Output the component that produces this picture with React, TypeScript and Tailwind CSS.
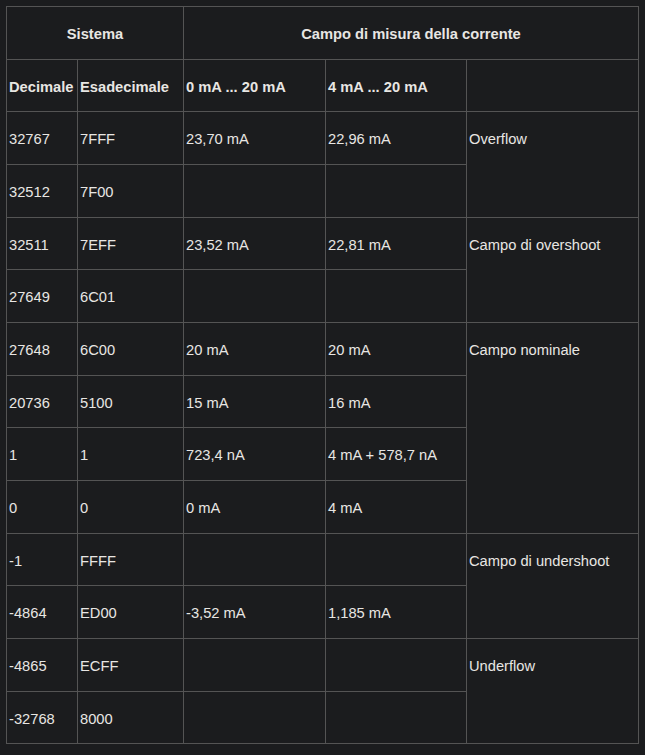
const rows: { dec: string; hex: string; a: string; b: string; range?: string; span?: number }[] = [
  { dec: '32767', hex: '7FFF', a: '23,70 mA', b: '22,96 mA', range: 'Overflow', span: 2 },
  { dec: '32512', hex: '7F00', a: '', b: '' },
  { dec: '32511', hex: '7EFF', a: '23,52 mA', b: '22,81 mA', range: 'Campo di overshoot', span: 2 },
  { dec: '27649', hex: '6C01', a: '', b: '' },
  { dec: '27648', hex: '6C00', a: '20 mA', b: '20 mA', range: 'Campo nominale', span: 4 },
  { dec: '20736', hex: '5100', a: '15 mA', b: '16 mA' },
  { dec: '1', hex: '1', a: '723,4 nA', b: '4 mA + 578,7 nA' },
  { dec: '0', hex: '0', a: '0 mA', b: '4 mA' },
  { dec: '-1', hex: 'FFFF', a: '', b: '', range: 'Campo di undershoot', span: 2 },
  { dec: '-4864', hex: 'ED00', a: '-3,52 mA', b: '1,185 mA' },
  { dec: '-4865', hex: 'ECFF', a: '', b: '', range: 'Underflow', span: 2 },
  { dec: '-32768', hex: '8000', a: '', b: '' },
]

const cell = 'border border-[#545454] px-[2px] pt-[20px] pb-[16px] leading-[15.67px] align-top text-left'

export default function App() {
  return (
    <div className="min-h-[755px] bg-[#1b1c1e] p-[6px] text-[14.7px] text-[#e8e6e3] [font-family:'Liberation_Sans',Arial,sans-serif]">
      <table className="border-collapse">
        <colgroup>
          <col className="w-[71px]" />
          <col className="w-[106px]" />
          <col className="w-[142px]" />
          <col className="w-[141px]" />
          <col className="w-[172px]" />
        </colgroup>
        <thead>
          <tr>
            <th colSpan={2} className={`${cell} !text-center font-bold`}>Sistema</th>
            <th colSpan={3} className={`${cell} !text-center font-bold`}>Campo di misura della corrente</th>
          </tr>
          <tr>
            <th className={`${cell} font-bold`}>Decimale</th>
            <th className={`${cell} font-bold`}>Esadecimale</th>
            <th className={`${cell} font-bold`}>0 mA ... 20 mA</th>
            <th className={`${cell} font-bold`}>4 mA ... 20 mA</th>
            <th className={cell}></th>
          </tr>
        </thead>
        <tbody>
          {rows.map((r) => (
            <tr key={r.dec}>
              <td className={cell}>{r.dec}</td>
              <td className={cell}>{r.hex}</td>
              <td className={cell}>{r.a}</td>
              <td className={cell}>{r.b}</td>
              {r.range && (
                <td rowSpan={r.span} className={cell}>
                  {r.range}
                </td>
              )}
            </tr>
          ))}
        </tbody>
      </table>
    </div>
  )
}
